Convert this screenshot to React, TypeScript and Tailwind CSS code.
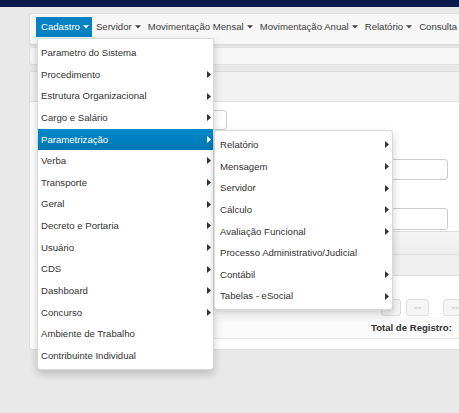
import React from "react";

const mainItems: { label: string; sub?: boolean }[] = [
  { label: "Parametro do Sistema" },
  { label: "Procedimento", sub: true },
  { label: "Estrutura Organizacional", sub: true },
  { label: "Cargo e Salário", sub: true },
  { label: "Parametrização", sub: true },
  { label: "Verba", sub: true },
  { label: "Transporte", sub: true },
  { label: "Geral", sub: true },
  { label: "Decreto e Portaria", sub: true },
  { label: "Usuário", sub: true },
  { label: "CDS", sub: true },
  { label: "Dashboard", sub: true },
  { label: "Concurso", sub: true },
  { label: "Ambiente de Trabalho" },
  { label: "Contribuinte Individual" },
];

const subItems: { label: string; sub?: boolean }[] = [
  { label: "Relatório", sub: true },
  { label: "Mensagem", sub: true },
  { label: "Servidor", sub: true },
  { label: "Cálculo", sub: true },
  { label: "Avaliação Funcional", sub: true },
  { label: "Processo Administrativo/Judicial" },
  { label: "Contábil", sub: true },
  { label: "Tabelas - eSocial", sub: true },
];

const navItems = [
  "Cadastro",
  "Servidor",
  "Movimentação Mensal",
  "Movimentação Anual",
  "Relatório",
  "Consulta",
];

function Caret({ white }: { white?: boolean }) {
  return (
    <svg width="6" height="4" viewBox="0 0 6 4" className="shrink-0">
      <path d="M0 0.3 L6 0.3 L3 3.6 Z" fill={white ? "#ffffff" : "#444444"} />
    </svg>
  );
}

function RightArrow({ white }: { white?: boolean }) {
  return (
    <svg width="4" height="7" viewBox="0 0 4 7" className="shrink-0">
      <path d="M0 0 L4 3.5 L0 7 Z" fill={white ? "#ffffff" : "#333333"} />
    </svg>
  );
}

function MenuRow({
  label,
  sub,
  active,
  pad,
}: {
  label: string;
  sub?: boolean;
  active?: boolean;
  pad: string;
}) {
  return (
    <div
      className={`flex items-center justify-between h-[21.64px] ${pad} ${
        active
          ? "bg-gradient-to-b from-[#0088cc] to-[#0077b3] text-white"
          : "text-[#333]"
      }`}
    >
      <span className="whitespace-nowrap">{label}</span>
      {sub && <RightArrow white={active} />}
    </div>
  );
}

export default function App() {
  return (
    <div
      className="relative w-[459px] h-[413px] overflow-hidden bg-[#e9e9e9] text-[9.6px] leading-none"
      style={{ fontFamily: '"Liberation Sans", Arial, sans-serif' }}
    >
      {/* top bar */}
      <div className="h-[7px] bg-[#0c1a4b]" />

      <div className="pl-[29px] pt-[6px]">
        {/* navbar */}
        <div className="h-[32px] w-[440px] rounded-l-[3px] border border-[#dcdcdc] bg-[#f7f7f7] pl-[6px] pt-[3px] flex items-start shadow-[0_1px_2px_rgba(0,0,0,0.06)]">
          {navItems.map((n, i) => (
            <div
              key={n}
              className={`flex items-center h-[20px] pl-[4px] pr-[3px] gap-[3px] whitespace-nowrap ${
                i === 0 ? "bg-[#0681c1] text-white pl-[5px]" : "text-[#3d3d3d]"
              }`}
            >
              <span>{n}</span>
              {i < navItems.length - 1 && <Caret white={i === 0} />}
            </div>
          ))}
        </div>

        {/* breadcrumb strip */}
        <div className="mt-[2px] h-[18px] w-[440px] rounded-l-[3px] border border-[#e0e0e0] bg-[#f6f6f6]" />

        {/* main panel */}
        <div className="mt-[6px] h-[279px] w-[440px] rounded-l-[3px] border border-[#dddddd] bg-white flex flex-col">
          <div className="h-[30px] bg-[#f2f2f2] border-b border-[#e0e0e0]" />
          <div className="mt-[8px] ml-[120px] h-[20px] w-[77px] rounded-[3px] border border-[#cccccc]" />
          <div className="mt-[29px] ml-[310px] h-[21px] w-[108px] rounded-[3px] border border-[#cccccc]" />
          <div className="mt-[28px] ml-[310px] h-[22px] w-[108px] rounded-[3px] border border-[#cccccc]" />
          <div className="mt-[1px] ml-[10px] h-[24px] border-t border-b border-[#dddddd] bg-gradient-to-b from-[#f5f5f5] to-[#ededed]" />
          <div className="ml-[10px] h-[21px] border-b border-[#dddddd] bg-[#f0f0f0]" />
          <div className="ml-[10px] h-[41px] flex items-start pt-[23px]">
            <span className="ml-[250px] mt-[-1px] font-bold text-[#555] whitespace-nowrap">
              Página 1 de 1
            </span>
            <div className="ml-[30px] flex">
              <div className="h-[17px] w-[20px] rounded-[3px] border border-[#dddddd] bg-[#f5f5f5] text-[6px] text-[#aaa] flex items-center justify-center">
                |&lt;
              </div>
              <div className="ml-[5px] h-[17px] w-[23px] rounded-[3px] border border-[#dddddd] bg-[#f5f5f5] text-[6px] text-[#aaa] flex items-center justify-center">
                &lt;&lt;
              </div>
              <div className="ml-[14px] h-[17px] w-[23px] rounded-[3px] border border-[#dddddd] bg-[#f5f5f5] text-[6px] text-[#aaa] flex items-center justify-center">
                &gt;&gt;
              </div>
            </div>
          </div>
          <div className="ml-[10px] h-[22px] border-b border-[#e5e5e5] bg-[#fafafa] flex items-center">
            <span className="ml-[331px] font-bold text-[#333]">
              Total de Registro:
            </span>
          </div>
        </div>
      </div>

      {/* dropdown menu */}
      <div className="absolute left-[37px] top-[38px] w-[177px] h-[332px] pt-[3px] rounded-b-[4px] border border-[rgba(0,0,0,0.15)] bg-white shadow-[0_4px_8px_rgba(0,0,0,0.2)]">
        {mainItems.map((m, i) => (
          <MenuRow
            key={m.label}
            label={m.label}
            sub={m.sub}
            active={i === 4}
            pad="pl-[3px] pr-[2px]"
          />
        ))}
      </div>

      {/* submenu */}
      <div className="absolute left-[214px] top-[130px] w-[179px] h-[180px] pt-[3px] rounded-[4px] border border-[rgba(0,0,0,0.15)] bg-white shadow-[0_4px_8px_rgba(0,0,0,0.2)]">
        {subItems.map((m) => (
          <MenuRow key={m.label} label={m.label} sub={m.sub} pad="pl-[5px] pr-[3px]" />
        ))}
      </div>
    </div>
  );
}
